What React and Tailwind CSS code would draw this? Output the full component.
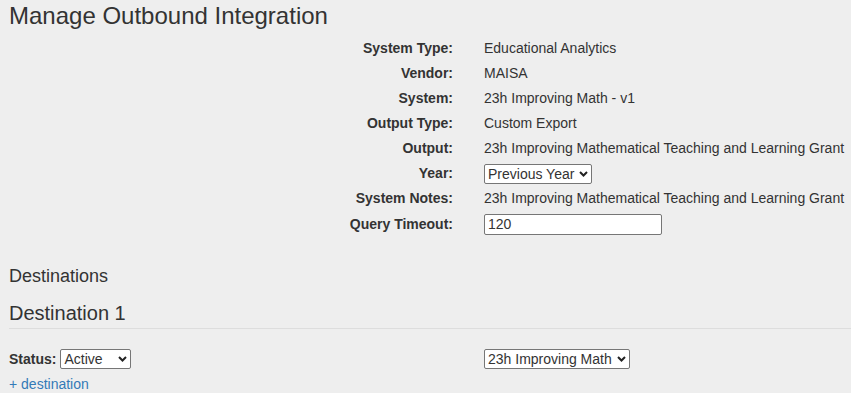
import React from 'react';

const FIELDS = [
  { label: 'System Type:', value: 'Educational Analytics' },
  { label: 'Vendor:', value: 'MAISA' },
  { label: 'System:', value: '23h Improving Math - v1' },
  { label: 'Output Type:', value: 'Custom Export' },
  { label: 'Output:', value: '23h Improving Mathematical Teaching and Learning Grant' },
  { label: 'Year:', kind: 'year' },
  { label: 'System Notes:', value: '23h Improving Mathematical Teaching and Learning Grant' },
  { label: 'Query Timeout:', kind: 'timeout' },
];

// native-looking select with our own chevron so the text isn't clipped
const Select = ({ width, options, defaultValue }) => (
  <span className={`relative inline-flex shrink-0 ${width}`}>
    <select
      defaultValue={defaultValue}
      className="appearance-none w-full h-[20px] border border-[#767676] rounded-[2px] bg-white text-[14px] text-[#333] pl-[3px] pr-[14px] leading-[18px] outline-none"
    >
      {options.map((o) => (
        <option key={o.value} value={o.value}>{o.label}</option>
      ))}
    </select>
    <svg
      className="pointer-events-none absolute right-[4px] top-[7px]"
      width="9"
      height="6"
      viewBox="0 0 9 6"
    >
      <polyline points="1,1 4.5,4.5 8,1" fill="none" stroke="#222" strokeWidth="2" />
    </svg>
  </span>
);

const FieldValue = ({ field }) => {
  if (field.kind === 'year') {
    return (
      <Select
        width="w-[108px]"
        defaultValue="prev"
        options={[
          { value: 'prev', label: 'Previous Year' },
          { value: 'cur', label: 'Current Year' },
        ]}
      />
    );
  }
  if (field.kind === 'timeout') {
    return (
      <input
        type="text"
        defaultValue="120"
        className="h-[21px] w-[178px] border border-[#767676] rounded-[2px] bg-white px-[3px] text-[14px] text-[#333] outline-none"
      />
    );
  }
  return <span>{field.value}</span>;
};

export default function App() {
  return (
    <div
      className="min-h-screen w-full bg-[#eeeeee] text-[#333] text-[14px] px-[9px] overflow-hidden"
      style={{ fontFamily: '"Liberation Sans", Arial, sans-serif' }}
    >
      <h1 className="pt-[3px] text-[24px] leading-[26px] font-normal">Manage Outbound Integration</h1>

      {/* detail rows */}
      <div className="mt-[7px] flex flex-col">
        {FIELDS.map((f, i) => (
          <div key={f.label} className={`flex items-center ${i === FIELDS.length - 1 ? 'h-[26px]' : 'h-[25px]'}`}>
            <div className="w-[444px] shrink-0 text-right font-bold">{f.label}</div>
            <div className="ml-[31px] shrink-0 whitespace-nowrap flex items-center">
              <FieldValue field={f} />
            </div>
          </div>
        ))}
      </div>

      <h2 className="mt-[29px] text-[18px] leading-[20px]">Destinations</h2>
      <h3 className="mt-[16px] text-[20px] leading-[22px]">Destination 1</h3>
      <div className="mt-[4px] -mr-[9px] border-t border-[#dddddd]" />

      <div className="mt-[20px] flex items-center h-[20px]">
        <div className="w-[475px] shrink-0 flex items-center gap-[4px]">
          <span className="font-bold">Status:</span>
          <Select
            width="w-[71px]"
            defaultValue="active"
            options={[
              { value: 'active', label: 'Active' },
              { value: 'inactive', label: 'Inactive' },
            ]}
          />
        </div>
        <Select
          width="w-[146px]"
          defaultValue="math"
          options={[{ value: 'math', label: '23h Improving Math' }]}
        />
      </div>

      <a href="#" className="mt-[5px] block w-fit leading-[20px] text-[#337ab7]">
        + destination
      </a>
    </div>
  );
}
